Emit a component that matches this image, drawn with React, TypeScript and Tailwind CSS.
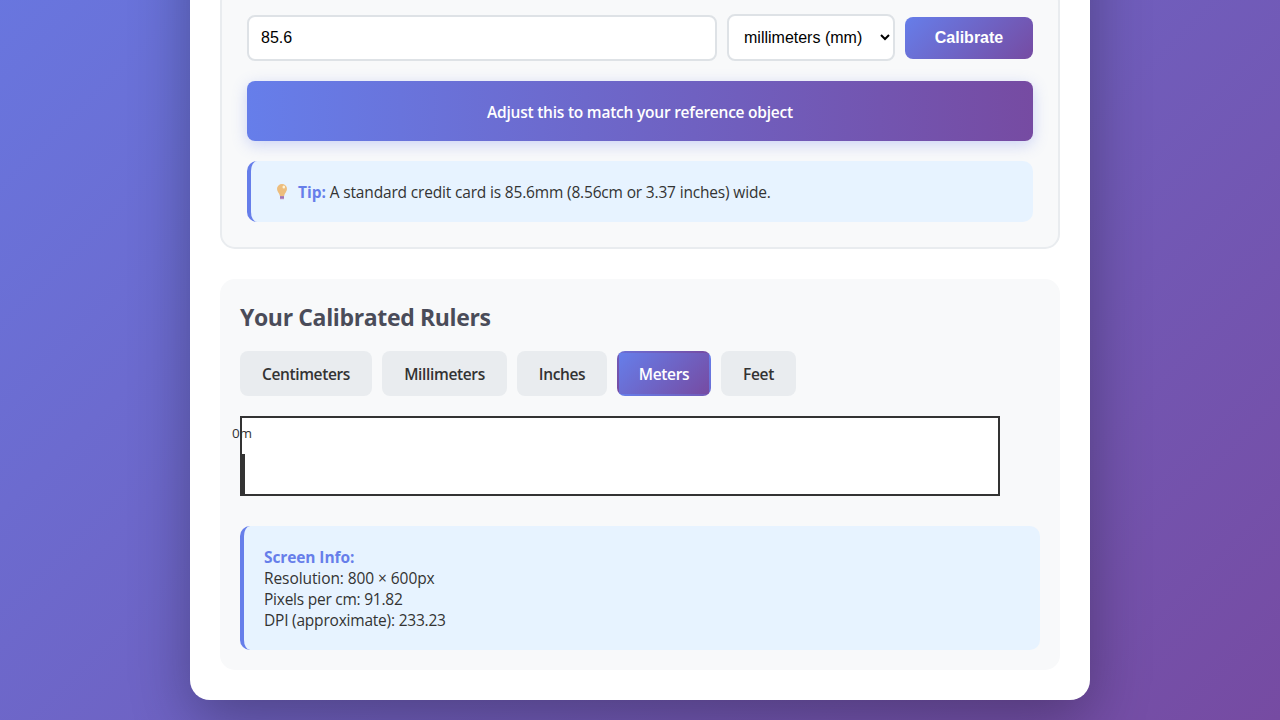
import { useState } from 'react'
import clsx from 'clsx'

const units = [
  { name: 'Centimeters', width: 'w-[132px]' },
  { name: 'Millimeters', width: 'w-[125px]' },
  { name: 'Inches', width: 'w-[90px]' },
  { name: 'Meters', width: 'w-[94px]' },
  { name: 'Feet', width: 'w-[75px]' },
]

function BulbIcon() {
  return (
    <svg viewBox="0 0 12 18" className="h-[18px] w-3">
      <path
        d="M6 1a5 5 0 0 0-5 5c0 2.8 2.5 4 2.9 7h4.2C8.5 10 11 8.8 11 6a5 5 0 0 0-5-5z"
        fill="#edbd7d"
      />
      <ellipse cx="7.8" cy="4" rx="1.3" ry="1.6" fill="#fff4d6" />
      <path d="M4 13h4v3.2H4z" fill="#b58cc0" />
      <path d="M4 14.2h4" stroke="#8d62a8" strokeWidth="0.8" />
    </svg>
  )
}

function CalibrationPanel() {
  return (
    <section className="rounded-[15px] border-2 border-[#e9ecef] bg-[#f8f9fa] p-[25px]">
      <div className="flex h-[47px] items-center gap-2.5 font-['Liberation_Sans',Arial,sans-serif] text-base">
        <input
          defaultValue="85.6"
          className="h-[46px] min-w-0 flex-1 rounded-lg border-2 border-[#dee2e6] bg-white px-3 text-black outline-none"
        />
        <select className="h-[47px] w-[168px] rounded-lg border-2 border-[#dee2e6] bg-white px-[11px] text-black">
          <option>millimeters (mm)</option>
          <option>centimeters (cm)</option>
          <option>inches (in)</option>
        </select>
        <button className="h-[42px] w-32 rounded-lg bg-[linear-gradient(135deg,#667eea,#764ba2)] font-bold text-white">
          Calibrate
        </button>
      </div>

      <div className="mt-5 flex h-[60px] items-center justify-center rounded-lg bg-[linear-gradient(90deg,#667eea,#764ba2)] pt-[3px] font-semibold tracking-[-0.23px] text-white shadow-[0_4px_15px_rgba(102,126,234,0.3)]">
        Adjust this to match your reference object
      </div>

      <div className="mt-5 flex h-[61px] items-center rounded-[10px] border-l-4 border-[#667eea] bg-[#e7f3ff] pl-[25px]">
        <BulbIcon />
        <p className="ml-2.5 pt-0.5 tracking-[-0.17px]">
          <strong className="font-bold tracking-normal text-[#667eea]">
            Tip:
          </strong>{' '}
          A standard credit card is 85.6mm (8.56cm or 3.37 inches) wide.
        </p>
      </div>
    </section>
  )
}

function Ruler() {
  return (
    <div className="relative mt-5 h-20 w-[760px] border-2 border-[#333] bg-white">
      <div className="absolute bottom-0 left-0 h-10 w-[3px] bg-[#333]" />
      <span className="absolute top-[5px] left-0 -translate-x-1/2 text-[13.5px] leading-5 font-medium">
        0m
      </span>
    </div>
  )
}

export default function App() {
  const [unit, setUnit] = useState('Meters')

  return (
    <div className="h-[720px] overflow-hidden bg-[linear-gradient(135deg,#667eea_-269px,#764ba2_100%)] font-['Open_Sans','Noto_Sans',sans-serif] text-[15.5px] leading-[21px] text-[#333]">
      <main className="mx-auto -mt-[100px] h-[800px] w-[900px] rounded-[20px] bg-white px-[30px] pt-[87px] shadow-[0_20px_60px_rgba(0,0,0,0.3)]">
        <CalibrationPanel />

        <section className="mt-[30px] h-[391px] rounded-[15px] bg-[#f8f9fa] p-5">
          <h2 className="pt-0.5 text-[23px] leading-8 font-bold tracking-[-0.36px] text-[#4a4c59]">
            Your Calibrated Rulers
          </h2>
          <div className="mt-[18px] flex gap-2.5">
            {units.map(({ name, width }) => (
              <button
                key={name}
                onClick={() => setUnit(name)}
                className={clsx(
                  'h-[45px] rounded-lg border-2 border-transparent pt-0.5 font-semibold tracking-[-0.36px] whitespace-nowrap',
                  width,
                  unit === name
                    ? 'bg-[linear-gradient(135deg,#667eea,#764ba2)] text-white'
                    : 'bg-[#e9ecef] text-[#333]',
                )}
              >
                {name}
              </button>
            ))}
          </div>
          <Ruler />
          <div className="mt-[30px] rounded-[10px] border-l-4 border-[#667eea] bg-[#e7f3ff] pt-[21px] pr-5 pb-[19px] pl-5">
            <strong className="block font-bold tracking-[-0.1px] text-[#667eea]">
              Screen Info:
            </strong>
            <p className="tracking-[-0.08px]">Resolution: 800 × 600px</p>
            <p className="tracking-[-0.24px]">Pixels per cm: 91.82</p>
            <p className="tracking-[-0.21px]">DPI (approximate): 233.23</p>
          </div>
        </section>
      </main>
    </div>
  )
}
